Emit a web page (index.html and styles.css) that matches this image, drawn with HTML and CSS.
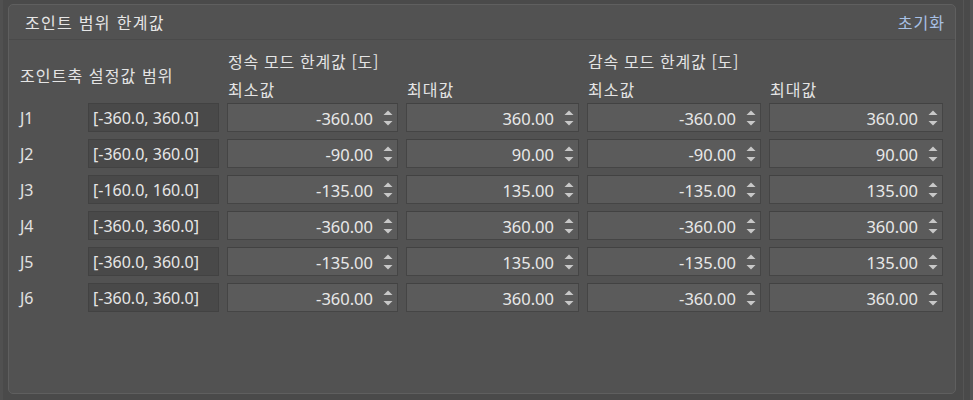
FILE: index.html
```html
<!DOCTYPE html>
<html lang="ko">
<head>
<meta charset="utf-8">
<link rel="stylesheet" href="styles.css">
</head>
<body>
<div class="window">
  <section class="panel">
    <header class="panel-head">
      <span class="title">조인트 범위 한계값</span>
      <span class="reset">초기화</span>
    </header>
    <div class="grid">
      <div class="h-axis">조인트축 설정값 범위</div>
      <div class="h-group g1">정속 모드 한계값 [도]</div>
      <div class="h-group g2">감속 모드 한계값 [도]</div>
      <div class="h-sub c3">최소값</div>
      <div class="h-sub c4">최대값</div>
      <div class="h-sub c5">최소값</div>
      <div class="h-sub c6">최대값</div>

      <div class="jl">J1</div><div class="range">[-360.0, 360.0]</div>
      <div class="spin"><span class="val">-360.00</span><span class="arr"><svg viewBox="0 0 10 20"><path d="M0.5 7 L5 2.5 L9.5 7Z"/><path d="M0.5 13 L5 17.5 L9.5 13Z"/></svg></span></div>
      <div class="spin"><span class="val">360.00</span><span class="arr"><svg viewBox="0 0 10 20"><path d="M0.5 7 L5 2.5 L9.5 7Z"/><path d="M0.5 13 L5 17.5 L9.5 13Z"/></svg></span></div>
      <div class="spin"><span class="val">-360.00</span><span class="arr"><svg viewBox="0 0 10 20"><path d="M0.5 7 L5 2.5 L9.5 7Z"/><path d="M0.5 13 L5 17.5 L9.5 13Z"/></svg></span></div>
      <div class="spin"><span class="val">360.00</span><span class="arr"><svg viewBox="0 0 10 20"><path d="M0.5 7 L5 2.5 L9.5 7Z"/><path d="M0.5 13 L5 17.5 L9.5 13Z"/></svg></span></div>

      <div class="jl">J2</div><div class="range">[-360.0, 360.0]</div>
      <div class="spin"><span class="val">-90.00</span><span class="arr"><svg viewBox="0 0 10 20"><path d="M0.5 7 L5 2.5 L9.5 7Z"/><path d="M0.5 13 L5 17.5 L9.5 13Z"/></svg></span></div>
      <div class="spin"><span class="val">90.00</span><span class="arr"><svg viewBox="0 0 10 20"><path d="M0.5 7 L5 2.5 L9.5 7Z"/><path d="M0.5 13 L5 17.5 L9.5 13Z"/></svg></span></div>
      <div class="spin"><span class="val">-90.00</span><span class="arr"><svg viewBox="0 0 10 20"><path d="M0.5 7 L5 2.5 L9.5 7Z"/><path d="M0.5 13 L5 17.5 L9.5 13Z"/></svg></span></div>
      <div class="spin"><span class="val">90.00</span><span class="arr"><svg viewBox="0 0 10 20"><path d="M0.5 7 L5 2.5 L9.5 7Z"/><path d="M0.5 13 L5 17.5 L9.5 13Z"/></svg></span></div>

      <div class="jl">J3</div><div class="range">[-160.0, 160.0]</div>
      <div class="spin"><span class="val">-135.00</span><span class="arr"><svg viewBox="0 0 10 20"><path d="M0.5 7 L5 2.5 L9.5 7Z"/><path d="M0.5 13 L5 17.5 L9.5 13Z"/></svg></span></div>
      <div class="spin"><span class="val">135.00</span><span class="arr"><svg viewBox="0 0 10 20"><path d="M0.5 7 L5 2.5 L9.5 7Z"/><path d="M0.5 13 L5 17.5 L9.5 13Z"/></svg></span></div>
      <div class="spin"><span class="val">-135.00</span><span class="arr"><svg viewBox="0 0 10 20"><path d="M0.5 7 L5 2.5 L9.5 7Z"/><path d="M0.5 13 L5 17.5 L9.5 13Z"/></svg></span></div>
      <div class="spin"><span class="val">135.00</span><span class="arr"><svg viewBox="0 0 10 20"><path d="M0.5 7 L5 2.5 L9.5 7Z"/><path d="M0.5 13 L5 17.5 L9.5 13Z"/></svg></span></div>

      <div class="jl">J4</div><div class="range">[-360.0, 360.0]</div>
      <div class="spin"><span class="val">-360.00</span><span class="arr"><svg viewBox="0 0 10 20"><path d="M0.5 7 L5 2.5 L9.5 7Z"/><path d="M0.5 13 L5 17.5 L9.5 13Z"/></svg></span></div>
      <div class="spin"><span class="val">360.00</span><span class="arr"><svg viewBox="0 0 10 20"><path d="M0.5 7 L5 2.5 L9.5 7Z"/><path d="M0.5 13 L5 17.5 L9.5 13Z"/></svg></span></div>
      <div class="spin"><span class="val">-360.00</span><span class="arr"><svg viewBox="0 0 10 20"><path d="M0.5 7 L5 2.5 L9.5 7Z"/><path d="M0.5 13 L5 17.5 L9.5 13Z"/></svg></span></div>
      <div class="spin"><span class="val">360.00</span><span class="arr"><svg viewBox="0 0 10 20"><path d="M0.5 7 L5 2.5 L9.5 7Z"/><path d="M0.5 13 L5 17.5 L9.5 13Z"/></svg></span></div>

      <div class="jl">J5</div><div class="range">[-360.0, 360.0]</div>
      <div class="spin"><span class="val">-135.00</span><span class="arr"><svg viewBox="0 0 10 20"><path d="M0.5 7 L5 2.5 L9.5 7Z"/><path d="M0.5 13 L5 17.5 L9.5 13Z"/></svg></span></div>
      <div class="spin"><span class="val">135.00</span><span class="arr"><svg viewBox="0 0 10 20"><path d="M0.5 7 L5 2.5 L9.5 7Z"/><path d="M0.5 13 L5 17.5 L9.5 13Z"/></svg></span></div>
      <div class="spin"><span class="val">-135.00</span><span class="arr"><svg viewBox="0 0 10 20"><path d="M0.5 7 L5 2.5 L9.5 7Z"/><path d="M0.5 13 L5 17.5 L9.5 13Z"/></svg></span></div>
      <div class="spin"><span class="val">135.00</span><span class="arr"><svg viewBox="0 0 10 20"><path d="M0.5 7 L5 2.5 L9.5 7Z"/><path d="M0.5 13 L5 17.5 L9.5 13Z"/></svg></span></div>

      <div class="jl">J6</div><div class="range">[-360.0, 360.0]</div>
      <div class="spin"><span class="val">-360.00</span><span class="arr"><svg viewBox="0 0 10 20"><path d="M0.5 7 L5 2.5 L9.5 7Z"/><path d="M0.5 13 L5 17.5 L9.5 13Z"/></svg></span></div>
      <div class="spin"><span class="val">360.00</span><span class="arr"><svg viewBox="0 0 10 20"><path d="M0.5 7 L5 2.5 L9.5 7Z"/><path d="M0.5 13 L5 17.5 L9.5 13Z"/></svg></span></div>
      <div class="spin"><span class="val">-360.00</span><span class="arr"><svg viewBox="0 0 10 20"><path d="M0.5 7 L5 2.5 L9.5 7Z"/><path d="M0.5 13 L5 17.5 L9.5 13Z"/></svg></span></div>
      <div class="spin"><span class="val">360.00</span><span class="arr"><svg viewBox="0 0 10 20"><path d="M0.5 7 L5 2.5 L9.5 7Z"/><path d="M0.5 13 L5 17.5 L9.5 13Z"/></svg></span></div>
    </div>
  </section>
  <div class="scroll"></div>
</div>
</body>
</html>
```

FILE: styles.css
```css
html, body {
  margin: 0;
  padding: 0;
  background: #4a4a4a;
  width: 973px;
  height: 400px;
  overflow: hidden;
}
.window {
  box-sizing: border-box;
  width: 973px;
  height: 400px;
  display: flex;
  padding: 4px 0 6px 5px;
  gap: 7px;
  border-left: 3px solid #505050;
  font-family: "Noto Sans", "Noto Sans CJK KR", sans-serif;
  color: #e4e4e4;
}
.panel {
  box-sizing: border-box;
  width: 948px;
  height: 390px;
  background: #525252;
  border: 1px solid #5f5f5f;
  border-radius: 5px;
  display: flex;
  flex-direction: column;
}
.panel-head {
  height: 35px;
  box-sizing: border-box;
  border-bottom: 1px solid #4a4a4a;
  display: flex;
  align-items: center;
  justify-content: space-between;
  padding: 0 11px 0 16px;
  font-family: "Noto Sans CJK KR", sans-serif;
  font-size: 16px;
}
.title { color: #e6e6e6; letter-spacing: 1.3px; }
.reset { color: #a8c0e4; letter-spacing: 1px; margin-right: -1px; }
.grid {
  display: grid;
  grid-template-columns: 60px 131px 171px 173px 174px 174px;
  grid-template-rows: 29px 28px repeat(6, 36px);
  column-gap: 8px;
  padding: 6px 0 0 11px;
  font-size: 16px;
}
.h-axis {
  grid-column: 1 / 3;
  grid-row: 1 / 3;
  align-self: center;
  font-family: "Noto Sans CJK KR", sans-serif;
  letter-spacing: 1.1px;
}
.h-group {
  grid-row: 1;
  align-self: center;
  font-family: "Noto Sans CJK KR", sans-serif;
  padding-left: 1px;
  letter-spacing: 0.7px;
}
.g1 { grid-column: 3 / 5; }
.g2 { grid-column: 5 / 7; }
.h-sub {
  grid-row: 2;
  align-self: end;
  line-height: 20px;
  padding-bottom: 4px;
  padding-left: 1px;
  font-family: "Noto Sans CJK KR", sans-serif;
  letter-spacing: 1px;
}
.c3 { grid-column: 3; }
.c4 { grid-column: 4; }
.c5 { grid-column: 5; }
.c6 { grid-column: 6; }
.jl {
  height: 29px;
  line-height: 30px;
  font-size: 16px;
  color: #e2e2e2;
}
.range {
  box-sizing: border-box;
  height: 29px;
  line-height: 28px;
  background: #494949;
  border: 1px solid #424242;
  padding-left: 4px;
  font-size: 16px;
  color: #e6e6e6;
}
.spin {
  box-sizing: border-box;
  height: 29px;
  background: #5b5b5b;
  border: 1px solid #454545;
  border-top-color: #424242;
  display: flex;
  align-items: center;
  justify-content: flex-end;
  font-size: 16.5px;
  color: #e8e8e8;
}
.val {
  line-height: 27px;
  padding-top: 1px;
}
.arr {
  width: 14px;
  margin-left: 10px;
  height: 20px;
  display: flex;
  justify-content: flex-start;
}
.arr svg {
  width: 10px;
  height: 20px;
  fill: #c8c8c8;
}
.scroll {
  width: 10px;
  margin-top: -4px;
  margin-bottom: -6px;
  border-left: 1px solid #555555;
  border-right: 3px solid #555555;
  box-sizing: border-box;
}
```
